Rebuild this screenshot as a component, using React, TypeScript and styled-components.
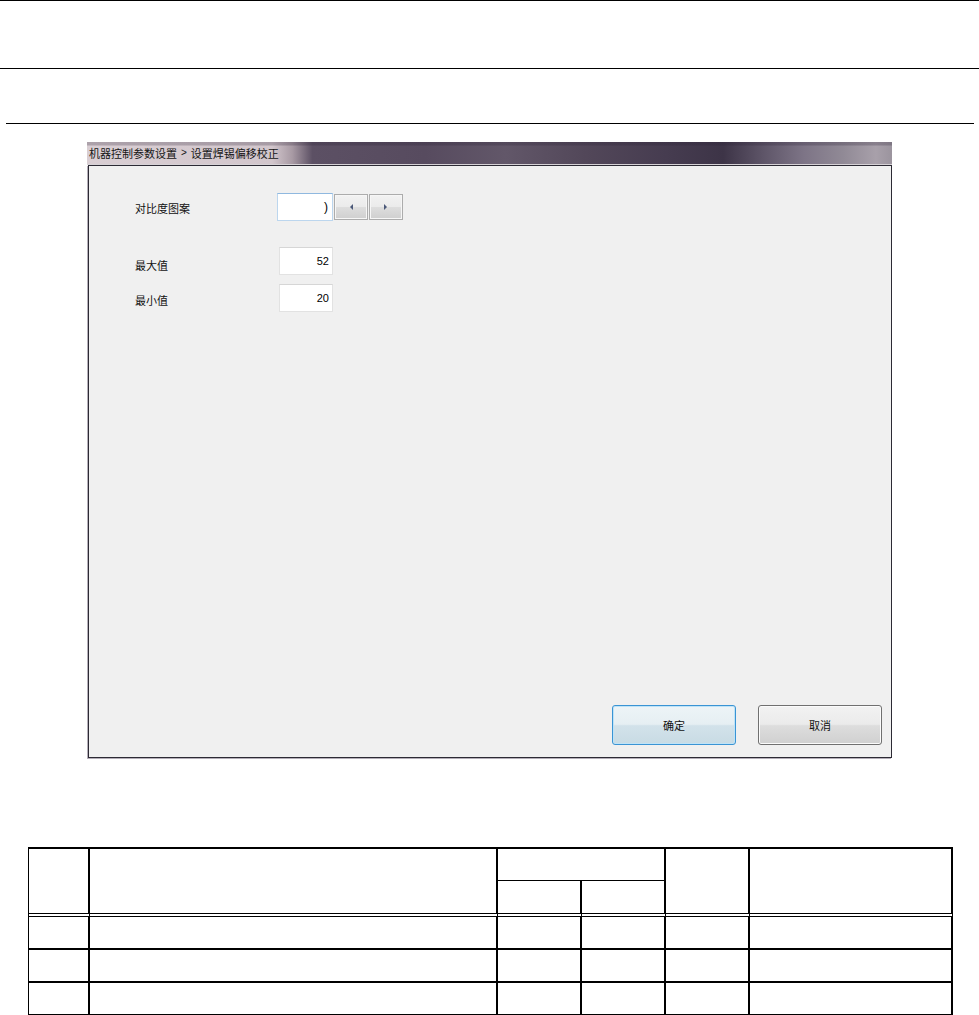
import React from "react";
import styled, { createGlobalStyle } from "styled-components";

const GlobalStyle = createGlobalStyle`
  html, body { margin: 0; padding: 0; background: #ffffff; }
  body { font-family: "Noto Sans CJK SC", "Liberation Sans", sans-serif; }
  * { box-sizing: border-box; }
`;

const Page = styled.div`
  width: 979px;
  height: 1015px;
  overflow: hidden;
  display: flex;
  flex-direction: column;
  align-items: flex-start;
`;

const Rule = styled.div<{ $top: number; $left?: number; $right?: number }>`
  align-self: stretch;
  flex: none;
  height: 1px;
  background: #000;
  margin: ${(p) => p.$top}px ${(p) => p.$right ?? 0}px 0 ${(p) => p.$left ?? 0}px;
`;

const Window = styled.div`
  flex: none;
  margin: 18px 0 0 87px;
  width: 805px;
  height: 616px;
  display: flex;
  flex-direction: column;
`;

const TitleBar = styled.div`
  flex: none;
  height: 23px;
  display: flex;
  align-items: center;
  padding: 0 0 1px 2px;
  border-bottom: 1px solid #d6d2d6;
  background:
    linear-gradient(180deg, rgba(40, 30, 50, 0.25) 0px, rgba(40, 30, 50, 0.25) 3px, rgba(0, 0, 0, 0) 4px),
    linear-gradient(
      90deg,
      #d9ced3 0%,
      #d2c6cc 23%,
      #a89aa4 25.5%,
      #5c5064 28%,
      #574b5f 42%,
      #625769 52%,
      #524759 62%,
      #463c50 72%,
      #3d3447 79%,
      #5e5568 84%,
      #7d7486 89%,
      #918a96 94%,
      #a8a0aa 98%,
      #9b949e 100%
    );
  color: #151515;
  font-size: 11px;
  white-space: pre;
`;

const Separator = styled.span`
  font-family: "Liberation Sans", Arial, sans-serif;
  font-size: 10px;
  margin: 0 4px;
`;

const Client = styled.div`
  flex: 1;
  margin-left: 1px;
  border: 1px solid #2c2a34;
  box-shadow: -1px 1px 0 #b4aeb8;
  background: #f0f0f0;
  display: flex;
  flex-direction: column;
`;

const Form = styled.div`
  display: flex;
  flex-direction: column;
  padding: 27px 0 0 46px;
`;

const FieldRow = styled.div<{ $gap: number }>`
  display: flex;
  align-items: center;
  margin-top: ${(p) => p.$gap}px;
  &:first-child { margin-top: 0; }
`;

const Label = styled.span<{ $width: number; $drop?: number }>`
  width: ${(p) => p.$width}px;
  font-size: 11px;
  color: #111;
  padding-top: ${(p) => p.$drop ?? 0}px;
  line-height: 14px;
`;

const NumberBox = styled.div<{ $width: number; $focused?: boolean }>`
  width: ${(p) => p.$width}px;
  height: 28px;
  background: #ffffff;
  border: 1px solid ${(p) => (p.$focused ? "#bcd6ee" : "#e2e2e2")};
  border-top-color: ${(p) => (p.$focused ? "#8fb8df" : "#d6d6d6")};
  display: flex;
  align-items: center;
  justify-content: flex-end;
  padding-right: 3px;
  font-family: "Liberation Sans", Arial, sans-serif;
  font-size: 11px;
  color: #000;
`;

const CaretGlyph = styled.span`
  font-family: "Liberation Sans", Arial, sans-serif;
  font-size: 12px;
  line-height: 14px;
  padding-right: 1px;
`;

const SpinGroup = styled.div`
  display: flex;
  gap: 1px;
  margin-left: 1px;
`;

const SpinButton = styled.div`
  width: 34px;
  height: 26px;
  border: 1px solid #acacac;
  box-shadow: inset 0 0 0 1px #f6f6f6;
  background: linear-gradient(180deg, #f2f2f2 0%, #ebebeb 48%, #dddddd 52%, #cfcfcf 100%);
  display: flex;
  align-items: center;
  justify-content: center;
`;

const Footer = styled.div`
  margin-top: auto;
  display: flex;
  justify-content: flex-end;
  gap: 22px;
  padding: 0 9px 12px 0;
`;

const DialogButton = styled.div<{ $primary?: boolean }>`
  width: 124px;
  height: 40px;
  border-radius: 3px;
  border: 1px solid ${(p) => (p.$primary ? "#3a94d4" : "#707070")};
  box-shadow: inset 0 0 0 1px ${(p) => (p.$primary ? "#bfe3f7" : "#fbfbfb")};
  background: ${(p) =>
    p.$primary
      ? "linear-gradient(180deg, #edf4f7 0%, #e6eff3 48%, #d2e2ea 52%, #c8dbe4 100%)"
      : "linear-gradient(180deg, #f2f2f2 0%, #ebebeb 48%, #dddddd 52%, #d0d0d0 100%)"};
  display: flex;
  align-items: center;
  justify-content: center;
  font-size: 11px;
  color: #111;
`;

const Table = styled.div`
  flex: none;
  margin: 89px 0 0 28px;
  display: grid;
  grid-template-columns: 61px 408px 84px 84px 84px 203px;
  grid-template-rows: 32px 36px 33px 33px 33px;
  border-top: 2px solid #000;
  border-left: 1px solid #000;
`;

type Edge = "thin" | "double" | "thick";

const Cell = styled.div<{ $bottom: Edge; $col?: string; $row?: string }>`
  border-right: 2px solid #000;
  border-bottom: ${(p) =>
    p.$bottom === "thin" ? "1px solid #000" : p.$bottom === "double" ? "4px double #000" : "2px solid #000"};
  ${(p) => (p.$col ? `grid-column: ${p.$col};` : "")}
  ${(p) => (p.$row ? `grid-row: ${p.$row};` : "")}
`;

const Arrow = ({ dir }: { dir: "left" | "right" }) => (
  <svg width="4" height="6" viewBox="0 0 4 6">
    {dir === "left" ? (
      <polygon points="4,0 4,6 1,3" fill="#4b5878" />
    ) : (
      <polygon points="0,0 0,6 3,3" fill="#4b5878" />
    )}
  </svg>
);

export default function App() {
  const dataRows = [0, 1, 2];
  return (
    <>
      <GlobalStyle />
      <Page>
        <Rule $top={0} />
        <Rule $top={67} />
        <Rule $top={54} $left={6} $right={5} />
        <Window>
          <TitleBar>
            机器控制参数设置<Separator>&gt;</Separator>设置焊锡偏移校正
          </TitleBar>
          <Client>
            <Form>
              <FieldRow $gap={0}>
                <Label $width={142} $drop={1}>对比度图案</Label>
                <NumberBox $width={56} $focused>
                  <CaretGlyph>)</CaretGlyph>
                </NumberBox>
                <SpinGroup>
                  <SpinButton>
                    <Arrow dir="left" />
                  </SpinButton>
                  <SpinButton>
                    <Arrow dir="right" />
                  </SpinButton>
                </SpinGroup>
              </FieldRow>
              <FieldRow $gap={26}>
                <Label $width={144} $drop={8}>最大值</Label>
                <NumberBox $width={54}>52</NumberBox>
              </FieldRow>
              <FieldRow $gap={9}>
                <Label $width={144} $drop={4}>最小值</Label>
                <NumberBox $width={54}>20</NumberBox>
              </FieldRow>
            </Form>
            <Footer>
              <DialogButton $primary>确定</DialogButton>
              <DialogButton>取消</DialogButton>
            </Footer>
          </Client>
        </Window>
        <Table>
          <Cell $bottom="double" $col="1" $row="1 / 3" />
          <Cell $bottom="double" $col="2" $row="1 / 3" />
          <Cell $bottom="thin" $col="3 / 5" $row="1" />
          <Cell $bottom="double" $col="5" $row="1 / 3" />
          <Cell $bottom="double" $col="6" $row="1 / 3" />
          <Cell $bottom="double" $col="3" $row="2" />
          <Cell $bottom="double" $col="4" $row="2" />
          {dataRows.map((r) =>
            [0, 1, 2, 3, 4, 5].map((c) => <Cell key={`${r}-${c}`} $bottom="thick" />)
          )}
        </Table>
      </Page>
    </>
  );
}
